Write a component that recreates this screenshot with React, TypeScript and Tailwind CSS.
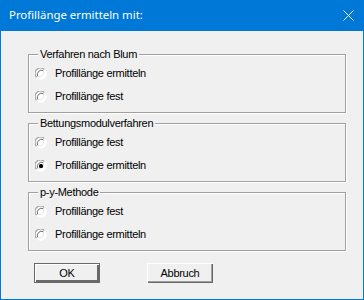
import React from 'react';

const Radio = ({ checked = false }: { checked?: boolean }) => (
  <svg width="12" height="12" viewBox="0 0 12 12" className="shrink-0">
    <circle cx="6" cy="6" r="5.5" fill="#ffffff" />
    <path d="M1.6 9.4 A5.5 5.5 0 0 1 9.4 1.6" fill="none" stroke="#a0a0a0" strokeWidth="1.2" />
    <path d="M2.6 8.4 A4.4 4.4 0 0 1 8.4 2.6" fill="none" stroke="#696969" strokeWidth="1" />
    <path d="M9.4 1.6 A5.5 5.5 0 0 1 1.6 9.4" fill="none" stroke="#ffffff" strokeWidth="1.2" />
    <path d="M8.4 2.6 A4.4 4.4 0 0 1 2.6 8.4" fill="none" stroke="#e3e3e3" strokeWidth="1" />
    {checked && <rect x="4" y="4" width="4" height="4" rx="1.5" fill="#000000" />}
  </svg>
);

const Option = ({ label, checked }: { label: string; checked?: boolean }) => (
  <div className="flex items-center gap-[8px] h-[13px]">
    <Radio checked={checked} />
    <span>{label}</span>
  </div>
);

const Group = ({ title, options }: { title: string; options: { label: string; checked?: boolean }[] }) => (
  <div className="relative h-[59px] border border-[#a0a0a0] shadow-[1px_1px_0_#ffffff,inset_1px_1px_0_#ffffff]">
    <span className="absolute left-[9px] top-[-8px] bg-[#f0f0f0] px-[2px] leading-[14px]">{title}</span>
    <div className="flex flex-col gap-[10px] pl-[6px] pt-[12px]">
      {options.map((o) => (
        <Option key={o.label} label={o.label} checked={o.checked} />
      ))}
    </div>
  </div>
);

const Button = ({ label, isDefault }: { label: string; isDefault?: boolean }) => (
  <button
    className={`w-[66px] h-[20px] bg-[#f0f0f0] text-black leading-none ${
      isDefault
        ? 'border border-[#696969] shadow-[inset_1px_1px_0_#ffffff,inset_-2px_-2px_0_#696969]'
        : 'shadow-[inset_1px_1px_0_#ffffff,inset_-1px_-1px_0_#696969,inset_-2px_-2px_0_#a0a0a0]'
    }`}
  >
    {label}
  </button>
);

export default function App() {
  return (
    <div className="w-[364px] h-[300px] flex flex-col bg-[#0078d7] font-['Liberation_Sans',Arial,sans-serif] text-[11px] tracking-[-0.3px] text-black">
      <div className="h-[31px] shrink-0 flex items-center justify-between pl-[9px] pr-[10px] text-white">
        <span className="font-['Noto_Sans','Open_Sans',sans-serif] text-[11.4px] tracking-normal leading-none pb-[1px]">Profillänge ermitteln mit:</span>
        <svg width="11" height="11" viewBox="0 0 11 11" className="mb-[1px]">
          <path d="M0.5 0.5 L10.5 10.5 M10.5 0.5 L0.5 10.5" stroke="#ffffff" strokeWidth="1" />
        </svg>
      </div>
      <div className="flex-1 mx-[1px] mb-[1px] bg-[#f0f0f0] flex flex-col pl-[27px] pr-[17px] pt-[23px]">
        <div className="flex flex-col gap-[10px]">
          <Group
            title="Verfahren nach Blum"
            options={[{ label: 'Profillänge ermitteln' }, { label: 'Profillänge fest' }]}
          />
          <Group
            title="Bettungsmodulverfahren"
            options={[{ label: 'Profillänge fest' }, { label: 'Profillänge ermitteln', checked: true }]}
          />
          <Group
            title="p-y-Methode"
            options={[{ label: 'Profillänge fest' }, { label: 'Profillänge ermitteln' }]}
          />
        </div>
        <div className="flex gap-[47px] pl-[6px] pt-[12px]">
          <Button label="OK" isDefault />
          <Button label="Abbruch" />
        </div>
      </div>
    </div>
  );
}
